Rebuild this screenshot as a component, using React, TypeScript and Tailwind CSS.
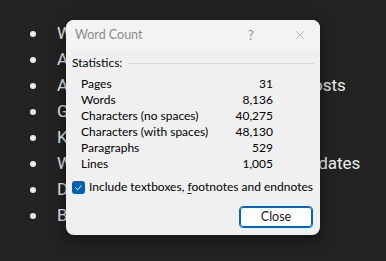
import { X } from 'lucide-react'

const ITEMS = [
  { text: 'Word count by section' },
  { text: 'Average sentence length' },
  { text: 'Analyze reading time for all blog posts' },
  { text: 'Grammar and spelling checks' },
  { text: 'Keyword density report' },
  { text: 'Weekly summary for all content updates' },
  { text: 'Document outline export' },
  { text: 'Backup and version history' },
]

const STATS = [
  ['Pages', '31'],
  ['Words', '8,136'],
  ['Characters (no spaces)', '40,275'],
  ['Characters (with spaces)', '48,130'],
  ['Paragraphs', '529'],
  ['Lines', '1,005'],
]

function WordCountDialog() {
  return (
    <div className="absolute left-[66px] top-[20px] w-[254px] h-[215px] rounded-[8px] bg-[#f0f0f0] overflow-hidden shadow-[0_4px_16px_rgba(0,0,0,0.5)] text-[12px] text-black font-['Lato',sans-serif]">
      {/* Title bar */}
      <div className="h-[30px] bg-[#f3f3f3] flex items-center pl-[9px] pr-[13px]">
        <span className="text-[#8b8b8b] flex-1 leading-none text-[12.5px]">Word Count</span>
        <span className="text-[#8b8b8b] text-[13px] w-[10px] mr-[35px] leading-none">?</span>
        <X size={14} strokeWidth={1} className="text-[#8b8b8b]" />
      </div>

      <div className="px-[6px] pt-[5px]">
        <div className="flex items-center h-[16px]">
          <span>Statistics:</span>
          <div className="flex-1 h-px bg-[#d7d7d7] ml-[6px]" />
        </div>

        <div className="mt-[5px] pl-[9px] pr-[41px]">
          {STATS.map(([label, value]) => (
            <div key={label} className="flex justify-between h-[16px] items-center">
              <span>{label}</span>
              <span>{value}</span>
            </div>
          ))}
        </div>

        <div className="flex items-center mt-[7px] h-[16px] whitespace-nowrap">
          <span className="w-[13px] h-[13px] shrink-0 rounded-[3px] bg-[#005fb8] flex items-center justify-center">
            <svg width="9" height="9" viewBox="0 0 9 9" fill="none">
              <path d="M1.5 4.8 L3.6 6.8 L7.6 2.4" stroke="white" strokeWidth="1" />
            </svg>
          </span>
          <span className="ml-[4px]">
            Include textboxes, <span className="underline underline-offset-2">f</span>ootnotes and endnotes
          </span>
        </div>

        <div className="flex justify-end mt-[11px] pr-[1px]">
          <button className="w-[74px] h-[22px] rounded-[4px] border border-[#0067c0] outline outline-1 outline-[#0067c0] -outline-offset-2 bg-[#fdfdfd] leading-none text-[12.5px] text-[#1a1a1a]">
            Close
          </button>
        </div>
      </div>
    </div>
  )
}

export default function App() {
  return (
    <div className="relative w-[386px] h-[261px] bg-[#232323] overflow-hidden text-[#ececec] font-['Roboto',sans-serif] text-[17px]">
      <p className="leading-[26px] mt-[-21px] pl-[4px]">use below:</p>
      <ul className="mt-[16px]">
        {ITEMS.map((item) => (
          <li key={item.text} className="flex items-center h-[26px] whitespace-nowrap">
            <span className="w-[6px] h-[6px] shrink-0 rounded-full bg-[#ececec] ml-[30px] mr-[21px]" />
            <span className="shrink-0">{item.text}</span>
          </li>
        ))}
      </ul>
      <WordCountDialog />
    </div>
  )
}
